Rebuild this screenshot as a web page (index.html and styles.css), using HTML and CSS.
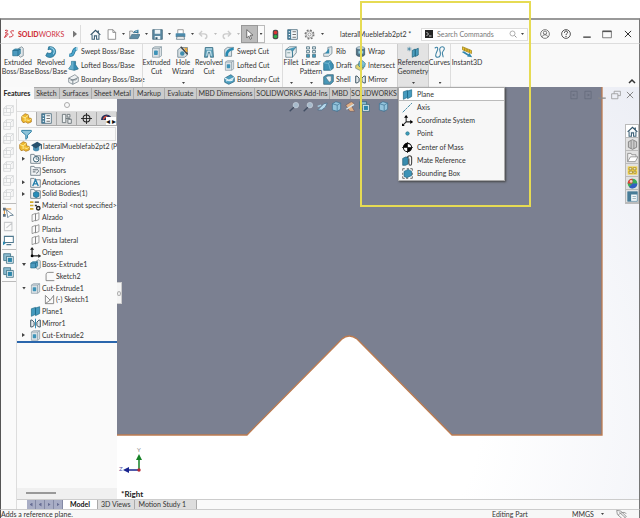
FILE: index.html
```html
<!DOCTYPE html>
<html lang="en">
<head>
<meta charset="utf-8">
<title>SOLIDWORKS - lateralMueblefab2pt2</title>
<link rel="stylesheet" href="styles.css">
</head>
<body>
<svg class="sprite" aria-hidden="true">
  <symbol id="home" viewBox="0 0 16 16"><path d="M3 8v7h3.500v-5h3v5H13V8" fill="#e8f0f5" stroke="#42657a" stroke-width="1.500"/><path d="M1 8.500 8 2l7 6.500M12 2v4" fill="none" stroke="#2f5268" stroke-width="1.800"/></symbol>
  <symbol id="page" viewBox="0 0 16 16"><path d="M3 1h7l4 4v10H3zM10 1v4h4" fill="#fff" stroke="#777" stroke-width="1.100"/></symbol>
  <symbol id="open" viewBox="0 0 16 16"><path d="M1 14V3h4l1 2h7v3" fill="#f3f3f3" stroke="#777"/><path d="M1 14 4 8h12l-3 6z" fill="#5f8da5" stroke="#466f84"/><path d="M7 6c1-4 4-4 6-2M13 1v4H9" fill="none" stroke="#2e779c" stroke-width="1.500"/></symbol>
  <symbol id="save" viewBox="0 0 16 16"><path d="M1 1h14v14H1z" fill="#5c8aa3" stroke="#31576c"/><path d="M4 1h8v6H4zM4 10h8v5H4z" fill="#eef4f7"/><path d="M5 12h3v3H5z" fill="#31576c"/></symbol>
  <symbol id="print" viewBox="0 0 16 16"><path d="M4 7V1h8v6" fill="#fff" stroke="#777"/><rect x="1" y="6" width="14" height="6" rx="1" fill="#4c8aab"/><path d="M3 11h10l1 4H2z" fill="#eee" stroke="#56707e"/></symbol>
  <symbol id="undo" viewBox="0 0 16 16"><path d="M6 3 2 7l4 4M2 7h7c5 0 5 6 1 7" fill="none" stroke="#ccc" stroke-width="2"/></symbol>
  <symbol id="redo" viewBox="0 0 16 16"><path d="m10 3 4 4-4 4M14 7H7c-5 0-5 6-1 7" fill="none" stroke="#ccc" stroke-width="2"/></symbol>
  <symbol id="cursor" viewBox="0 0 16 16"><path d="M4 1v12l3-3 2 5 2-1-2-5h4z" fill="#fff" stroke="#444"/></symbol>
  <symbol id="light" viewBox="0 0 16 16"><rect x="4" y="1" width="8" height="14" rx="3" fill="#4b4b4b"/><circle cx="8" cy="5" r="2.600" fill="#df3434"/><circle cx="8" cy="11" r="2.600" fill="#2eae4a"/></symbol>
  <symbol id="list" viewBox="0 0 16 16"><path d="M1 1h14v14H1z" fill="#f7fafb" stroke="#567586" stroke-width="1.300"/><path d="M1 1h5v14H1z" fill="#477c98"/><path d="M2.500 4h2M2.500 8h2M2.500 12h2" stroke="#fff" stroke-width="1.500"/><path d="M8 4h5M8 8h5M8 12h5" stroke="#555" stroke-width="1.200"/></symbol>
  <symbol id="gear" viewBox="0 0 16 16"><circle cx="8" cy="8" r="6.300" fill="none" stroke="#777" stroke-width="2" stroke-dasharray="2.700 2.250"/><circle cx="8" cy="8" r="5" fill="#fafafa" stroke="#777"/><circle cx="8" cy="8" r="2.300" fill="none" stroke="#777"/></symbol>
  <symbol id="glass" viewBox="0 0 16 16"><circle cx="7" cy="7" r="5" fill="none" stroke="#888" stroke-width="1.300"/><path d="m11 11 4 4" stroke="#888" stroke-width="1.800"/></symbol>
  <symbol id="prompt" viewBox="0 0 16 16"><path d="M0 0h16v16H0z" fill="#252525"/><path d="m3 4 4 4-4 4M8 12h5" fill="none" stroke="#fff" stroke-width="1.500"/></symbol>
  <symbol id="user" viewBox="0 0 16 16"><circle cx="8" cy="8" r="7" fill="none" stroke="#555" stroke-width="1.200"/><circle cx="8" cy="6" r="2.700" fill="none" stroke="#555" stroke-width="1.200"/><path d="M3 13c1-5 9-5 10 0" fill="none" stroke="#555" stroke-width="1.200"/></symbol>
  <symbol id="help" viewBox="0 0 16 16"><circle cx="8" cy="8" r="7" fill="none" stroke="#333" stroke-width="1.300"/><path d="M5.500 6c0-3.500 5-3.500 5-.500 0 2-2.500 2-2.500 4M8 11v1.800" fill="none" stroke="#333" stroke-width="1.600"/></symbol>
  <symbol id="min" viewBox="0 0 16 16"><path d="M2 13h12" stroke="currentColor" stroke-width="2"/></symbol>
  <symbol id="max" viewBox="0 0 16 16"><path d="M1 3h14v11H1z" fill="none" stroke="#555" stroke-width="1.200"/><path d="M1 4h14" stroke="#555" stroke-width="2"/></symbol>
  <symbol id="close" viewBox="0 0 16 16"><path d="m3 3 10 10M13 3 3 13" stroke="currentColor" stroke-width="1.600"/></symbol>
  <symbol id="restore" viewBox="0 0 16 16"><path d="M5 6V2h10v7h-4M1 6h10v8H1z" fill="none" stroke="#999" stroke-width="1.300"/></symbol>
  <symbol id="pane-l" viewBox="0 0 16 16"><path d="M3 2h10v12H3zM10 8H6M8 6 6 8l2 2" fill="none" stroke="#656b7c" stroke-width="1.300"/></symbol>
  <symbol id="pane-r" viewBox="0 0 16 16"><path d="M3 2h10v12H3zM6 8h4M8 6l2 2-2 2" fill="none" stroke="#656b7c" stroke-width="1.300"/></symbol>
  <symbol id="extrude" viewBox="0 0 16 16"><path d="M9 3 13 1l2 2v10l-4 2-2-2z" fill="#dfe6e9" stroke="#71818b"/><path d="m1 6 3-2h7v6l-3 3H1z" fill="#4c9abf" stroke="#24718f"/><path d="M1 6h7v7M8 6l3-2" fill="none" stroke="#1f6787"/></symbol>
  <symbol id="revolve" viewBox="0 0 16 16"><path d="M5 1c8-1 12 6 7 12-3 3-8 3-11 0l2-4c4 2 7 0 6-3-1-2-3-2-5-1z" fill="#3d92b8" stroke="#1d6989"/><path d="M7 2c5 1 7 5 4 9" fill="none" stroke="#a3d7ea" stroke-width="1.500"/></symbol>
  <symbol id="sweep" viewBox="0 0 16 16"><path d="M2 13c9 2 3-9 11-9" fill="none" stroke="#1d6c91" stroke-width="5"/><path d="M2 13c9 2 3-9 11-9" fill="none" stroke="#4ba5cb" stroke-width="3"/><ellipse cx="13" cy="4" rx="1.500" ry="3" fill="#a9d7e8"/></symbol>
  <symbol id="loft" viewBox="0 0 16 16"><path d="M5 2h6v5l4 6-6 2-8-2 4-6z" fill="#348bb2" stroke="#206782"/><path d="M5 2v5l-4 6 7 1V2z" fill="#66aecb"/></symbol>
  <symbol id="boundary" viewBox="0 0 16 16"><path d="m1 6 9-5 5 4v6l-8 4-6-3z" fill="#eef1f2" stroke="#6a7780"/><path d="m1 6 6 3 8-4M7 9v6M4 10c3-4 6 1 9-3" fill="none" stroke="#6a7780" stroke-width="1.200"/></symbol>
  <symbol id="cut" viewBox="0 0 16 16"><path d="m2 3 3-2h9v12l-3 2H2z" fill="#dbe2e6" stroke="#8799a3"/><path d="M2 3h9v12M11 3l3-2" fill="none" stroke="#8799a3"/><rect x="4" y="6" width="5" height="6" rx="1" fill="#3d93b8"/></symbol>
  <symbol id="hole" viewBox="0 0 16 16"><path d="m1 5 4-3h9v10l-4 3H1z" fill="#d6e0e4" stroke="#667b87"/><circle cx="7" cy="10" r="3" fill="#408eaf"/><path d="m5 1 9 10" stroke="#444" stroke-width="2"/><path d="m9 1 2 2 3-1-1 3 2 2-3 1" fill="#eca631"/></symbol>
  <symbol id="revcut" viewBox="0 0 16 16"><path d="M3 2h10l1 13h-4l-1-6H7l-1 6H2z" fill="#63a4bd" stroke="#32677d"/><path d="M4 4h8M5 13l1-6h4l1 6" fill="none" stroke="#e4f4fa" stroke-width="1.200"/></symbol>
  <symbol id="sweepcut" viewBox="0 0 16 16"><path d="m1 5 4-3h9l-3 5v8H1z" fill="#d9e3e8" stroke="#5d7581"/><path d="M4 15C3 8 7 5 14 4" fill="none" stroke="#278ab2" stroke-width="4"/></symbol>
  <symbol id="boundcut" viewBox="0 0 16 16"><path d="m1 6 9-5 5 4v6l-8 4-6-3z" fill="#4d9fc0" stroke="#225c77"/><path d="m1 6 6 3 8-4M3 10c4-2 6 2 10-2" fill="none" stroke="#e5f3f8" stroke-width="1.700"/></symbol>
  <symbol id="fillet" viewBox="0 0 16 16"><path d="m1 5 5-4h9v8l-5 6H1z" fill="#e6edef" stroke="#607985"/><path d="M1 5h6c3 0 3 3 3 10V7l5-6" fill="#4a9cbd" stroke="#367791"/><path d="M3 9h4" stroke="#688" /></symbol>
  <symbol id="pattern" viewBox="0 0 16 16"><g fill="#e5eef1" stroke="#557785" stroke-width="1.100"><path d="M2 1h4v3H2zM10 1h4v3h-4zM2 6h4v3H2zM10 6h4v3h-4z"/><path d="M2 11h4v4H2zM10 11h4v4h-4z" fill="#3e9bc0"/></g></symbol>
  <symbol id="rib" viewBox="0 0 16 16"><path d="m1 11 6-2V2l6-1v10l-5 4H1z" fill="#e2e9eb" stroke="#607581"/><path d="M3 11 9 3v8z" fill="#378db1"/></symbol>
  <symbol id="draft" viewBox="0 0 16 16"><path d="m1 4 4-3h6l4 6v5l-4 3H1z" fill="#3d91b5" stroke="#24647f"/><path d="m1 4 7 1 3 10M8 5l3-4" fill="none" stroke="#8bc8df"/></symbol>
  <symbol id="shell" viewBox="0 0 16 16"><path d="m1 4 5-3h9v10l-4 4H1z" fill="#4897b7" stroke="#325c70"/><path d="m4 5 3-2h5v7L9 12z" fill="#edf4f6" stroke="#547585"/></symbol>
  <symbol id="wrap" viewBox="0 0 16 16"><path d="M2 3v10c2 3 10 3 12 0V3" fill="#53758a" stroke="#354e5b"/><ellipse cx="8" cy="3" rx="6" ry="2" fill="#d5e1e6" stroke="#53758a"/><path d="M5 7h7v4H5z" fill="#92d0dd"/></symbol>
  <symbol id="intersect" viewBox="0 0 16 16"><path d="m1 8 5-3 6 3v5l-5 2-6-3z" fill="#e1d46d" stroke="#6c8176"/><path d="m6 2 5-1 4 4-1 5-5 2-4-4z" fill="#5eb0ca" fill-opacity=".8" stroke="#347187"/></symbol>
  <symbol id="mirror" viewBox="0 0 16 16"><path d="M1 3h2l3 3v5l-3 2H1zM15 3h-2l-3 3v5l3 2h2z" fill="#e1e8eb" stroke="#3e5563" stroke-width="1.400"/><path d="M8 1v14" stroke="#278bb5" stroke-width="1.400"/></symbol>
  <symbol id="refgeo" viewBox="0 0 16 16"><path d="m7 6 4-2v9l-4 2zM11 5l4-2v9l-4 2z" fill="#4b9dbf" stroke="#22657f"/><path d="M3 1v6M0 4h6M1 2l4 4M5 2 1 6" stroke="#377e9d" stroke-width=".8"/></symbol>
  <symbol id="curves" viewBox="0 0 16 16"><path d="M1 3c4-3 5 0 3 4s-3 8 1 8 4-5 3-8 0-6 3-6 4 3 1 6 1 5 0 8" fill="none" stroke="#397fa1" stroke-width="1.400"/></symbol>
  <symbol id="instant" viewBox="0 0 16 16"><path d="m2 1 12 5v4L2 5z" fill="#f4c72e" stroke="#98801d"/><path d="M5 3v3M8 4v3M11 5v3" stroke="#756114"/><path d="m1 8 3-1 6 4 1-2 4 6-7-1 1-1z" fill="#3186ad"/></symbol>
  <symbol id="part" viewBox="0 0 16 16"><path d="m1 5 5-4 5 2v4l4 1v5l-5 2-3-2-4 1-2-3z" fill="#efba30" stroke="#a66e13"/><path d="m1 5 5 2 5-4M6 7v5M8 10l4 1 3-3" fill="none" stroke="#fff0a1" stroke-width="1.300"/></symbol>
  <symbol id="cap" viewBox="0 0 16 16"><path d="M3 7v6c3 3 7 2 9 0V7" fill="#4a8fb3"/><path d="m0 6 9-5 7 4-9 6z" fill="#27516e"/><path d="M15 5v7" stroke="#204860" stroke-width="1.500"/></symbol>
  <symbol id="funnel" viewBox="0 0 16 16"><path d="M1 2h14v2L9.500 9v4L7 15V9L1 4z" fill="#8fc4da" stroke="#2e7fa3" stroke-width="1.400"/></symbol>
  <symbol id="config" viewBox="0 0 16 16"><path d="M2 2h5v12H2zM9 2h4v4H9zM10 9h5v6h-5zM7 8h6v2" fill="#eceff0" stroke="#6c767b" stroke-width="1.300"/></symbol>
  <symbol id="target" viewBox="0 0 16 16"><circle cx="8" cy="8" r="5" fill="none" stroke="#222" stroke-width="1.500"/><path d="M8 0v16M0 8h16" stroke="#222" stroke-width="1.300"/></symbol>
  <symbol id="display" viewBox="0 0 16 16"><path d="M0 10a8 8 0 0 1 16 0z" fill="#26315c"/><path d="M3 10a6 5 0 0 1 7-6" fill="#db5240"/></symbol>
  <symbol id="folder" viewBox="0 0 16 16"><path d="M1 2h5l1 2h8v11H1z" fill="#f2f4f5" stroke="#697782" stroke-width="1.200"/></symbol>
  <symbol id="history" viewBox="0 0 16 16"><use href="#folder"/><circle cx="9" cy="9" r="4" fill="#fff" stroke="#31586c" stroke-width="1.400"/><path d="M9 6v3h3" fill="none" stroke="#31586c"/></symbol>
  <symbol id="sensor" viewBox="0 0 16 16"><use href="#folder"/><path d="M4 7h6M4 10h4M9 12c4-1 4-5 1-6" fill="none" stroke="#53616b" stroke-width="1.400"/></symbol>
  <symbol id="note" viewBox="0 0 16 16"><use href="#folder"/><path d="m4 13 4-9 4 9M6 10h4" fill="none" stroke="#247eaa" stroke-width="2"/></symbol>
  <symbol id="bodies" viewBox="0 0 16 16"><use href="#folder"/><path d="m5 7 4-2 4 2v5l-4 2-4-2z" fill="#288db9" stroke="#1b607d"/></symbol>
  <symbol id="material" viewBox="0 0 16 16"><path d="M0 3h5M0 8h5M0 13h5" stroke="#d1a929" stroke-width="2.500"/><path d="M7 3h6M7 8h3" stroke="#333" stroke-width="2"/><circle cx="12" cy="12" r="2.500" fill="#eee" stroke="#222" stroke-width="2"/></symbol>
  <symbol id="plane" viewBox="0 0 16 16"><path d="m3 4 5-2v10l-5 2zM8 3l5-2v10l-5 2z" fill="#fafafa" stroke="#777"/></symbol>
  <symbol id="plane-blue" viewBox="0 0 16 16"><path d="m2 4 6-2v10l-6 3zM8 3l6-2v10l-6 3z" fill="#449abe" stroke="#1d6988"/></symbol>
  <symbol id="origin" viewBox="0 0 16 16"><path d="M3 2v11h12" fill="none" stroke="#222" stroke-width="1.700"/><path d="m0 4 3-4 3 4zM12 10l4 3-4 3z" fill="#222"/><circle cx="3" cy="13" r="2"/></symbol>
  <symbol id="sketch" viewBox="0 0 16 16"><path d="M14 2H7c-4 0-4 2-4 5v7h12" fill="none" stroke="#777" stroke-width="1.200"/></symbol>
  <symbol id="sketch-v" viewBox="0 0 16 16"><path d="M2 2v12h12V2l-5 7zM2 14l7-5" fill="none" stroke="#777" stroke-width="1.200"/></symbol>
  <symbol id="axis" viewBox="0 0 16 16"><path d="M1 15 15 1" stroke="#3e86a3" stroke-width="1.400" stroke-dasharray="6 1 2 1"/></symbol>
  <symbol id="coord" viewBox="0 0 16 16"><path d="M6 1v9h9M6 10l-5 5" fill="none" stroke="#222" stroke-width="1.500"/><path d="m3 4 3-4 3 4zM12 7l4 3-4 3zM0 12v4h4z"/></symbol>
  <symbol id="point" viewBox="0 0 16 16"><circle cx="8" cy="8" r="2.500" fill="#3c9fbd" stroke="#287086"/></symbol>
  <symbol id="mass" viewBox="0 0 16 16"><circle cx="8" cy="8" r="6" fill="#fff" stroke="#111" stroke-width="1.500"/><path d="M8 2a6 6 0 0 0-6 6h6zM8 14a6 6 0 0 0 6-6H8z"/><path d="M8 0v16M0 8h16" stroke="#111"/></symbol>
  <symbol id="mate" viewBox="0 0 16 16"><path d="m1 5 4-2h4v10l-4 2H1z" fill="#398cae" stroke="#205e78"/><path d="M8 4c0-4 6-4 6 0v8c0 4-4 4-4 0V5" fill="none" stroke="#444" stroke-width="1.600"/></symbol>
  <symbol id="bound" viewBox="0 0 16 16"><path d="m3 5 6-3 5 3v6l-7 3-4-2z" fill="#3c93b7" stroke="#1d6380"/><path d="M1 1h3M7 1h3M12 1h3v3M15 7v3M15 12v3h-3M9 15H6M4 15H1v-3M1 10V7M1 4V1" fill="none" stroke="#333"/></symbol>
  <symbol id="cube" viewBox="0 0 16 16"><path d="M1 5h10v10H1zM5 1h10v10h-4M1 5l4-4M11 5l4-4M5 1v10H1M5 11h6" fill="none" stroke="#d2d4d6" stroke-width="1.200"/></symbol>
  <symbol id="sel-sketch" viewBox="0 0 16 16"><path d="M2 2v10M2 3h10" stroke="#dc9030" stroke-width="1.500"/><path d="M0 1h4v4H0zM0 10h4v4H0z" fill="#5d7080"/><path d="m5 4 10 8-5 .5-3 3z" fill="#fff" stroke="#3d5d75"/></symbol>
  <symbol id="eraser" viewBox="0 0 16 16"><path d="M2 2h11v12H2zM5 10l8-7" fill="none" stroke="#c9cbcd" stroke-width="1.500"/></symbol>
  <symbol id="screen" viewBox="0 0 16 16"><path d="M2 2h13v9H2zM5 14h7" fill="#fff" stroke="#50798f" stroke-width="1.500"/><path d="m0 9 4 3-4 3z" fill="#288bb3"/></symbol>
  <symbol id="stack" viewBox="0 0 16 16"><path d="M1 1h10v10H1z" fill="#8dbdd1" stroke="#275e75"/><path d="M5 5h10v10H5z" fill="#dce9ee" stroke="#275e75"/><path d="M7 7h6v6H7z" fill="#2c86aa"/></symbol>
  <symbol id="library" viewBox="0 0 16 16"><path d="m2 4 6-3 6 3v8l-6 3-6-3z" fill="#ccc" stroke="#666"/><path d="M6 3v11M10 3v11" stroke="#777"/></symbol>
  <symbol id="openf" viewBox="0 0 16 16"><path d="M1 14V2h5l1 2h6v3" fill="#f3f3f3" stroke="#777"/><path d="m1 14 4-7h11l-4 7z" fill="#fff" stroke="#777"/></symbol>
  <symbol id="palette" viewBox="0 0 16 16"><path d="M1 2h14v12H1z" fill="#f4d44d"/><path d="M3 4h4v3H3zM9 4h4v3H9zM3 9h5v3H3zM10 9h3v3h-3z" fill="#fffbe0" stroke="#8d7725"/></symbol>
  <symbol id="ball" viewBox="0 0 16 16"><circle cx="8" cy="8" r="7" fill="#3bad58"/><path d="M8 8V1a7 7 0 0 0-7 7z" fill="#df3f36"/><path d="M8 8h7a7 7 0 0 1-12 5z" fill="#325fc4"/><circle cx="6" cy="5" r="2" fill="#fff" opacity=".7"/></symbol>
  <symbol id="props" viewBox="0 0 16 16"><path d="M1 1h14v14H1z" fill="#f3f8fa" stroke="#477c98"/><path d="M1 1h14v4H1zM1 5h5v10H1z" fill="#477c98"/><path d="M8 8h5M8 11h5" stroke="#7b98a7"/></symbol>
  <symbol id="view-cube" viewBox="0 0 16 16"><path d="m2 4 5-3 7 2v9l-5 3-7-2z" fill="#94c4dc" stroke="#3b6f90"/><path d="m2 4 7 2 5-3M9 6v9" fill="none" stroke="#3b6f90"/></symbol>
  <symbol id="view-find" viewBox="0 0 16 16"><circle cx="10" cy="6" r="4" fill="#a7bacb" stroke="#c7d1dc"/><path d="m7 9-6 6" stroke="#414d62" stroke-width="2"/></symbol>
  <symbol id="view-pen" viewBox="0 0 16 16"><path d="m1 13 9-9 5-1-3 6-5 4z" fill="#b6d9eb" stroke="#456a89"/><path d="m1 8 5-2" stroke="#a4cadf" stroke-width="2"/></symbol>
  <symbol id="view-scene" viewBox="0 0 16 16"><path d="m1 6 8-5 4 2-3 5 4 7H7z" fill="#e0b186" stroke="#705e63"/><path d="m2 12 11-7" stroke="#d4e7ef" stroke-width="2"/></symbol>
  <symbol id="tag" viewBox="0 0 16 16"><path d="m1 2 6 1 8 8-5 4-8-7zM5 5l8 7M3 9c5-5 10-5 12-2" fill="none" stroke="#888" stroke-width="1.200"/></symbol>
</svg>

<div class="app">
  <header class="titlebar">
    <div class="brand">
      <svg class="ds" viewBox="0 0 22 20" aria-hidden="true"><path d="M2 3c7-2 7 2 1 4M2 8c8-1 8 4-1 9l4-7M20 4c-7-2-8 2-4 5s2 7-6 7" fill="none" stroke="#cf303a" stroke-width="2"/></svg>
      <span class="logo"><b>SOLID</b>WORKS</span>
      <button class="expand" aria-label="Expand menu"></button>
    </div>
    <div class="quick">
      <button aria-label="Home"><svg><use href="#home"/></svg></button>
      <button aria-label="New"><svg><use href="#page"/></svg></button><i class="drop"></i>
      <button aria-label="Open"><svg><use href="#open"/></svg></button><i class="drop"></i>
      <button aria-label="Save"><svg><use href="#save"/></svg></button><i class="drop"></i>
      <button aria-label="Print"><svg><use href="#print"/></svg></button><i class="drop"></i>
      <button aria-label="Undo"><svg><use href="#undo"/></svg></button><i class="drop pale"></i>
      <button aria-label="Redo"><svg><use href="#redo"/></svg></button><i class="drop pale"></i>
      <button class="selected" aria-label="Select"><svg><use href="#cursor"/></svg></button><span class="boxed"><i class="drop"></i></span>
      <button aria-label="Rebuild"><svg><use href="#light"/></svg></button>
      <button aria-label="File properties"><svg><use href="#list"/></svg></button>
      <button aria-label="Options"><svg><use href="#gear"/></svg></button><i class="drop"></i>
    </div>
    <span class="doc">lateralMueblefab2pt2 *</span>
    <label class="search"><svg><use href="#prompt"/></svg><input type="text" placeholder="Search Commands" aria-label="Search Commands"><svg><use href="#glass"/></svg><i class="drop"></i></label>
    <div class="window">
      <button aria-label="Account"><svg><use href="#user"/></svg></button>
      <button aria-label="Help"><svg><use href="#help"/></svg></button>
      <button aria-label="Minimize"><svg><use href="#min"/></svg></button>
      <button aria-label="Maximize"><svg><use href="#max"/></svg></button>
      <button aria-label="Close"><svg><use href="#close"/></svg></button>
    </div>
  </header>

  <section class="ribbon">
    <button class="big wide"><svg><use href="#extrude"/></svg><span>Extruded<br>Boss/Base</span></button>
    <button class="big wide"><svg><use href="#revolve"/></svg><span>Revolved<br>Boss/Base</span></button>
    <div class="stack boss">
      <button><svg><use href="#sweep"/></svg>Swept Boss/Base</button>
      <button><svg><use href="#loft"/></svg>Lofted Boss/Base</button>
      <button><svg><use href="#boundary"/></svg>Boundary Boss/Base</button>
    </div>
    <button class="big first"><svg><use href="#cut"/></svg><span>Extruded<br>Cut</span></button>
    <button class="big"><svg><use href="#hole"/></svg><span>Hole<br>Wizard</span><i class="drop"></i></button>
    <button class="big"><svg><use href="#revcut"/></svg><span>Revolved<br>Cut</span></button>
    <div class="stack cuts">
      <button><svg><use href="#sweepcut"/></svg>Swept Cut</button>
      <button><svg><use href="#cut"/></svg>Lofted Cut</button>
      <button><svg><use href="#boundcut"/></svg>Boundary Cut</button>
    </div>
    <button class="big slim"><svg><use href="#fillet"/></svg><span>Fillet</span><i class="drop"></i></button>
    <button class="big mid"><svg><use href="#pattern"/></svg><span>Linear<br>Pattern</span><i class="drop"></i></button>
    <div class="stack feats">
      <button><svg><use href="#rib"/></svg>Rib</button>
      <button><svg><use href="#draft"/></svg>Draft</button>
      <button><svg><use href="#shell"/></svg>Shell</button>
    </div>
    <div class="stack more">
      <button><svg><use href="#wrap"/></svg>Wrap</button>
      <button><svg><use href="#intersect"/></svg>Intersect</button>
      <button><svg><use href="#mirror"/></svg>Mirror</button>
    </div>
    <button class="big wide active" aria-expanded="true"><svg><use href="#refgeo"/></svg><span>Reference<br>Geometry</span><i class="drop"></i></button>
    <button class="big curves"><svg><use href="#curves"/></svg><span>Curves</span><i class="drop"></i></button>
    <button class="big wide"><svg><use href="#instant"/></svg><span>Instant3D</span></button>
    <button class="collapse" aria-label="Collapse ribbon"><svg viewBox="0 0 8 6"><path d="m1 5 3-3 3 3" fill="none" stroke="#333" stroke-width="1.500"/></svg></button>
  </section>

  <main class="work">
    <nav class="tabs">
      <button class="on">Features</button><button>Sketch</button><button>Surfaces</button><button>Sheet Metal</button><button>Markup</button><button>Evaluate</button><button>MBD Dimensions</button><button>SOLIDWORKS Add-Ins</button><button>MBD</button><button>SOLIDWORKS</button>
    </nav>

    <div class="rail">
      <svg><use href="#cube"/></svg><svg><use href="#cube"/></svg><svg><use href="#cube"/></svg><svg><use href="#cube"/></svg><svg><use href="#cube"/></svg><svg><use href="#cube"/></svg><svg><use href="#cube"/></svg>
      <hr>
      <svg><use href="#sel-sketch"/></svg><svg><use href="#eraser"/></svg><svg><use href="#screen"/></svg>
      <hr>
      <svg><use href="#stack"/></svg><svg><use href="#stack"/></svg>
      <hr>
    </div>

    <aside class="manager">
      <div class="grip"></div>
      <div class="mtabs">
        <button class="on" aria-label="Feature tree"><svg><use href="#part"/></svg></button>
        <button aria-label="Properties"><svg><use href="#list"/></svg></button>
        <button aria-label="Configurations"><svg><use href="#config"/></svg></button>
        <button aria-label="Dimensions"><svg><use href="#target"/></svg></button>
        <button aria-label="Display"><svg><use href="#display"/></svg><span class="scroll">◂ ▸</span></button>
      </div>
      <div class="filter"><svg><use href="#funnel"/></svg></div>
      <ul class="tree">
        <li class="root"><svg><use href="#part"/></svg><svg><use href="#cap"/></svg>lateralMueblefab2pt2 (P</li>
        <li><i class="tw"></i><svg><use href="#history"/></svg>History</li>
        <li><svg><use href="#sensor"/></svg>Sensors</li>
        <li><i class="tw"></i><svg><use href="#note"/></svg>Anotaciones</li>
        <li><i class="tw"></i><svg><use href="#bodies"/></svg>Solid Bodies(1)</li>
        <li><svg><use href="#material"/></svg>Material &lt;not specified&gt;</li>
        <li><svg><use href="#plane"/></svg>Alzado</li>
        <li><svg><use href="#plane"/></svg>Planta</li>
        <li><svg><use href="#plane"/></svg>Vista lateral</li>
        <li><svg><use href="#origin"/></svg>Origen</li>
        <li><i class="tw open"></i><svg><use href="#extrude"/></svg>Boss-Extrude1</li>
        <li class="child"><svg><use href="#sketch"/></svg>Sketch2</li>
        <li><i class="tw open"></i><svg><use href="#cut"/></svg>Cut-Extrude1</li>
        <li class="child"><svg><use href="#sketch-v"/></svg>(-) Sketch1</li>
        <li><svg><use href="#plane-blue"/></svg>Plane1</li>
        <li><svg><use href="#mirror"/></svg>Mirror1</li>
        <li><i class="tw"></i><svg><use href="#cut"/></svg>Cut-Extrude2</li>
      </ul>
      <div class="hbar"></div>
    </aside>

    <section class="view">
      <svg class="model" viewBox="0 0 523 412" preserveAspectRatio="xMinYMin slice" role="img" aria-label="Part model">
        <path d="M-2-2H485V348H335L240 252Q232 246 225 252L130 348H-2Z" fill="#7b8091" stroke="#bd7b50" stroke-width="1.300"/>
        <g stroke-width="1.500"><path d="M22 383V371" stroke="#168126"/><path d="m19 373 3-6 3 6z" fill="#168126"/><path d="M22 383H9" stroke="#18248f"/><path d="m12 380-6 3 6 3z" fill="#18248f"/></g><circle cx="22" cy="383" r="1.700" fill="#b42a36"/>
        <text x="20" y="365" class="axis-y">Y</text><text x="2" y="384" class="axis-z">Z</text>
        <text x="4" y="410" class="orient">*Right</text>
      </svg>
      <div class="heads">
        <svg><use href="#view-find"/></svg><svg><use href="#view-find"/></svg><svg><use href="#view-pen"/></svg><svg><use href="#view-cube"/></svg><svg><use href="#view-scene"/></svg><svg><use href="#stack"/></svg><svg><use href="#view-cube"/></svg>
      </div>
      <div class="docwin">
        <button aria-label="Previous pane"><svg><use href="#pane-l"/></svg></button><button aria-label="Next pane"><svg><use href="#pane-r"/></svg></button><button aria-label="Minimize document"><svg><use href="#min"/></svg></button><button aria-label="Restore document"><svg><use href="#restore"/></svg></button><button aria-label="Close document"><svg><use href="#close"/></svg></button>
      </div>
      <div class="task">
        <button aria-label="Resources"><svg><use href="#home"/></svg></button><button aria-label="Library"><svg><use href="#library"/></svg></button><button aria-label="Explorer"><svg><use href="#openf"/></svg></button><button aria-label="View palette"><svg><use href="#palette"/></svg></button><button aria-label="Appearances"><svg><use href="#ball"/></svg></button><button aria-label="Custom properties"><svg><use href="#props"/></svg></button>
      </div>
      <button class="handle" aria-label="Collapse panel"></button>
    </section>

    <div class="sheets">
      <div class="pager"><span></span><span></span><span class="r"></span><span class="r"></span></div>
      <button class="on">Model</button><button>3D Views</button><button>Motion Study 1</button>
    </div>

    <div class="menu" role="menu">
      <button role="menuitem" class="hot"><svg><use href="#plane-blue"/></svg>Plane</button>
      <button role="menuitem"><svg><use href="#axis"/></svg>Axis</button>
      <button role="menuitem"><svg><use href="#coord"/></svg>Coordinate System</button>
      <button role="menuitem"><svg><use href="#point"/></svg>Point</button>
      <button role="menuitem"><svg><use href="#mass"/></svg>Center of Mass</button>
      <button role="menuitem"><svg><use href="#mate"/></svg>Mate Reference</button>
      <button role="menuitem"><svg><use href="#bound"/></svg>Bounding Box</button>
    </div>
  </main>

  <footer class="status"><span>Adds a reference plane.</span><span class="mode">Editing Part</span><span class="units">MMGS</span><i class="drop"></i><svg><use href="#tag"/></svg></footer>
</div>
<div class="callout"></div>
</body>
</html>
```
FILE: styles.css
```css
* { box-sizing: border-box; }
body { margin: 0; background: #fff; color: #333; font: 7px/9px Lato, "Open Sans", sans-serif; overflow: hidden; }
button, input { font: inherit; color: inherit; background: none; border: 0; padding: 0; margin: 0; outline: 0; }
button { display: flex; align-items: center; justify-content: center; white-space: nowrap; }
svg { width: 11px; height: 11px; flex: none; display: block; }
.sprite { position: absolute; width: 0; height: 0; }
.app { min-height: 100vh; padding-top: 18px; display: flex; flex-direction: column; }
.titlebar, .ribbon, .work, .status { border-left: 1px solid #555; border-right: 1px solid #777; }
.drop { width: 3px; height: 2px; flex: none; background: #444; clip-path: polygon(0 0, 100% 0, 50% 100%); }
.drop.pale { background: #bbb; }

.titlebar { height: 25px; border-top: 2px solid #999; background: #fafafa; display: flex; align-items: center; padding-top: 5px; }
.brand { display: flex; align-items: center; width: 80px; height: 19px; padding-left: 3px; gap: 3px; border-right: 1px solid #ddd; color: #cf303a; }
.brand .ds { width: 11px; height: 10px; }
.logo { width: 50px; }
.logo b { font-weight: 900; }
.expand { width: 4px; height: 7px; background: #777; clip-path: polygon(0 0, 100% 50%, 0 100%); margin-left: 2px; }
.quick { display: flex; align-items: center; width: 246px; padding-left: 9px; gap: 5px; }
.quick > button { height: 18px; }
.quick > .drop { margin-right: -1px; }
.quick .selected { background: #bbb; border: 1px solid #999; width: 17px; margin: 0 -5px 0 -3px; }
.quick .boxed { width: 7px; height: 18px; border: 1px solid #bbb; border-left: 0; display: grid; place-items: center; }
.quick .boxed ~ button { margin-right: 1px; }
.doc { width: 94px; padding-left: 13px; white-space: nowrap; }
.search { display: flex; align-items: center; flex: 1; min-width: 80px; height: 13px; gap: 4px; border: 1px solid #ddd; background: #fff; padding: 0 3px; }
.search svg { width: 8px; height: 8px; }
.search input { flex: 1; min-width: 0; }
.search input::placeholder { color: #777; }
.window { display: flex; justify-content: space-between; width: 93px; margin: 0 6px 0 12px; }
.window svg { width: 10px; height: 10px; }

.ribbon { height: 44px; border-top: 1px solid #ddd; background: #f9f9f9; display: flex; }
.ribbon > * { flex: none; }
.big { flex-direction: column; justify-content: flex-start; width: 26px; padding-top: 2px; position: relative; line-height: 9px; text-align: center; }
.big svg { width: 12px; height: 12px; }
.big .drop { position: absolute; bottom: 3px; left: 50%; margin-left: -1px; }
.wide { width: 32px; }
.wide:first-child { width: 34px; }
.wide.active { background: #e3e3e3; border: 1px solid #ccc; border-width: 0 1px; }
.first { width: 28px; border-left: 1px solid #ddd; }
.slim { width: 17px; border-left: 1px solid #ddd; }
.mid { width: 24px; }
.curves { width: 22px; border-right: 1px solid #ddd; }
.stack { display: grid; grid-template-rows: repeat(3, 14px); }
.stack button { justify-content: flex-start; gap: 2px; }
.boss { width: 75px; padding-left: 1px; }
.cuts { width: 60px; padding-left: 2px; }
.feats { width: 32px; }
.more { width: 42px; }
.collapse { margin: auto 3px 3px auto; }
.collapse svg { width: 8px; height: 6px; }

.work { flex: 1; position: relative; display: grid; grid-template: 1fr 10px / 16px 100px 1fr; background: #fafafa; }
.tabs { position: absolute; top: 0; left: 0; height: 12px; z-index: 2; display: grid; grid-template-columns: 33px 26px 32px 42px 31px 32px 58px 75px 21px 47px; }
.tabs button { background: #ccc; border: 1px solid #aaa; border-width: 1px 1px 0 0; overflow: hidden; }
.tabs .on { background: #fafafa; border-color: #fafafa; font-weight: 700; color: #222; }
.rail { grid-row: 1 / 3; padding-top: 18px; border-right: 1px solid #ddd; display: flex; flex-direction: column; align-items: center; gap: 3px; }
.rail hr { width: 14px; border: 0; border-top: 1px solid #bbb; margin: 0; }

.manager { padding-top: 12px; display: flex; flex-direction: column; min-width: 0; overflow: hidden; }
.grip { height: 13px; display: grid; place-items: center; border-bottom: 1px solid #ddd; }
.grip::after { content: ""; width: 4px; height: 4px; border: 1px solid #aaa; border-radius: 50%; }
.mtabs { display: grid; grid-template-columns: repeat(5, 1fr); height: 14px; }
.mtabs button { background: #d8d8d8; border-right: 1px solid #aaa; border-bottom: 1px solid #aaa; position: relative; }
.mtabs .on { background: #fafafa; border-bottom-color: #fafafa; }
.scroll { position: absolute; right: 0; bottom: 0; background: #fff; font-size: 8px; line-height: 8px; color: #111; }
.filter { height: 14px; border: 1px solid #ddd; margin: 1px 1px 0; display: flex; align-items: center; padding-left: 2px; }
.tree { list-style: none; margin: 0; padding: 0 0 0 2px; height: 202px; display: grid; grid-auto-rows: 1fr; border-bottom: 2px solid #2a66ac; }
.tree li { display: flex; align-items: center; gap: 1px; padding-left: 11px; position: relative; white-space: nowrap; }
.tree .root { padding-left: 0; }
.tree .child { padding-left: 25px; }
.tw { position: absolute; left: 3px; width: 3px; height: 4px; background: #444; clip-path: polygon(0 0, 100% 50%, 0 100%); }
.tw.open { width: 4px; height: 3px; clip-path: polygon(0 0, 100% 0, 50% 100%); }
.hbar { margin-top: auto; height: 11px; background: #f0f0f0; padding: 4px 0 0 9px; }
.hbar::after { content: ""; display: block; width: 30px; height: 2px; background: #999; }

.view { position: relative; min-width: 0; background: radial-gradient(ellipse at 30% 80%, #fff 40%, #eceef5 100%); overflow: hidden; }
.model { position: absolute; inset: 0; width: 100%; height: 100%; }
.model text { font-size: 6px; fill: #888; }
.model .axis-z { fill: #55a; }
.model .orient { font-size: 8px; font-weight: 700; fill: #222; }
.heads { position: absolute; top: 14px; left: 172px; display: flex; gap: 3px; }
.heads svg:last-child { margin-left: 5px; }
.docwin { position: absolute; top: 3px; right: 4px; display: flex; gap: 4px; color: #888; }
.docwin svg { width: 10px; height: 10px; }
.task { position: absolute; top: 37px; right: 0; width: 14px; display: grid; grid-auto-rows: 13px; border: 1px solid #bbb; background: #e2e2e2; }
.task button { border-bottom: 1px solid #bbb; }
.task button:first-child { background: #fff; }
.handle { position: absolute; left: 0; top: 195px; width: 5px; height: 22px; background: #f5f5f5; border: 1px solid #ccc; border-left: 0; }
.handle::after { content: ""; width: 3px; height: 3px; border: 1px solid #aaa; border-radius: 50%; }

.sheets { grid-column: 2 / 4; display: flex; border-top: 1px solid #ccc; padding-left: 10px; }
.sheets button { background: #ddd; border-right: 1px solid #aaa; padding: 0 3px; }
.sheets button:last-child { padding: 0 10px 0 4px; }
.sheets .on { background: #fff; font-weight: 700; color: #111; padding: 0 7px; }
.pager { display: grid; grid-template-columns: repeat(4, 9px); background: #a8adc5; }
.pager span { border-right: 1px solid #8389a5; display: grid; place-items: center; }
.pager span::after { content: ""; width: 3px; height: 4px; background: #666d94; clip-path: polygon(100% 0, 100% 100%, 0 50%); }
.pager .r::after { clip-path: polygon(0 0, 100% 50%, 0 100%); }

.menu { position: absolute; top: 0; left: 397px; width: 107px; height: 94px; z-index: 3; display: grid; grid-auto-rows: 1fr; background: #f7f7f7; border: 1px solid #aaa; box-shadow: 1px 1px 2px #444; }
.menu button { justify-content: flex-start; padding-left: 3px; gap: 4px; }
.menu .hot { background: #fff; border-bottom: 1px solid #bbb; }

.status { height: 9px; border-top: 1px solid #ccc; background: #f7f7f7; display: flex; align-items: center; white-space: nowrap; }
.status .mode { margin-left: auto; width: 80px; }
.status .units { width: 29px; }
.status svg { margin: 0 12px; }

.callout { position: absolute; left: 360px; top: 1px; width: 171px; height: 206px; border: 2px solid #e6db53; z-index: 5; pointer-events: none; }
```
